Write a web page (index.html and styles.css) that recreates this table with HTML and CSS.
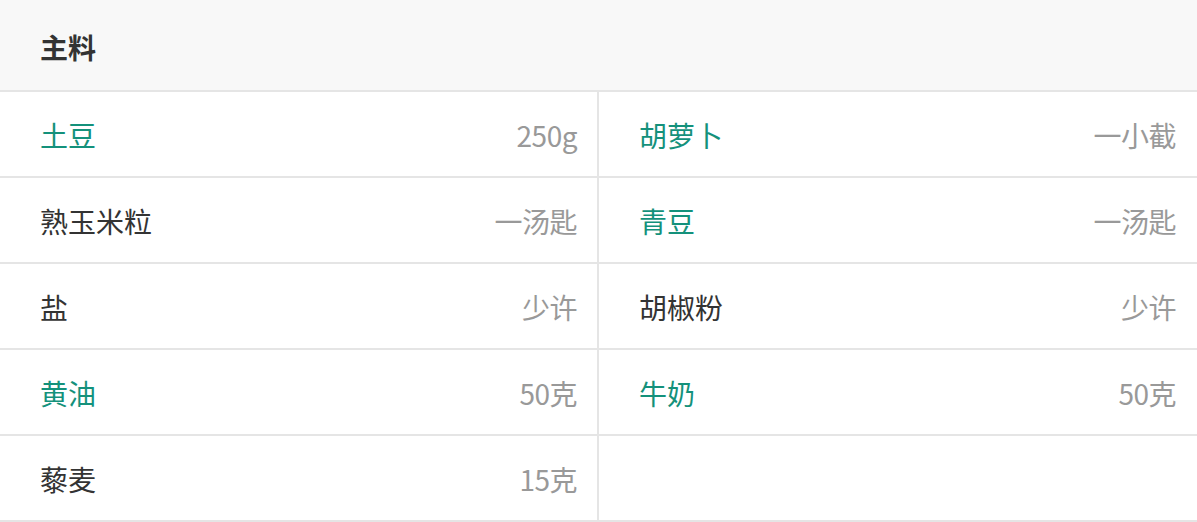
FILE: index.html
```html
<!DOCTYPE html>
<html lang="zh">
<head>
<meta charset="utf-8">
<link rel="stylesheet" href="styles.css">
</head>
<body>
<div class="panel">
  <div class="head">主料</div>
  <div class="grid">
    <div class="cell"><span class="name link">土豆</span><span class="qty">250g</span></div>
    <div class="cell"><span class="name link">胡萝卜</span><span class="qty">一小截</span></div>
    <div class="cell"><span class="name">熟玉米粒</span><span class="qty">一汤匙</span></div>
    <div class="cell"><span class="name link">青豆</span><span class="qty">一汤匙</span></div>
    <div class="cell"><span class="name">盐</span><span class="qty">少许</span></div>
    <div class="cell"><span class="name">胡椒粉</span><span class="qty">少许</span></div>
    <div class="cell"><span class="name link">黄油</span><span class="qty">50克</span></div>
    <div class="cell"><span class="name link">牛奶</span><span class="qty">50克</span></div>
    <div class="cell"><span class="name">藜麦</span><span class="qty">15克</span></div>
    <div class="cell"></div>
  </div>
</div>
</body>
</html>
```

FILE: styles.css
```css
* { box-sizing: border-box; }
html, body { margin: 0; padding: 0; background: #fff; }
body { font-family: "Noto Sans CJK SC", "Noto Sans", sans-serif; }
.panel { width: 1197px; }
.head {
  height: 92px;
  background: #f8f8f8;
  border-bottom: 2px solid #e5e5e5;
  padding-left: 40px;
  padding-top: 4px;
  display: flex;
  align-items: center;
  font-size: 28px;
  font-weight: bold;
  color: #333;
}
.grid {
  display: grid;
  grid-template-columns: 599px 598px;
}
.cell {
  height: 86px;
  border-bottom: 2px solid #e5e5e5;
  display: flex;
  align-items: center;
  justify-content: space-between;
  padding: 2px 20px 0 40px;
  font-size: 28px;
  line-height: 1;
}
.cell:nth-child(odd) { border-right: 2px solid #e5e5e5; }
.cell:nth-child(even) { padding-right: 21px; }
.name { color: #333; }
.name.link { color: #14917b; }
.qty { color: #999; letter-spacing: -0.5px; }
```
